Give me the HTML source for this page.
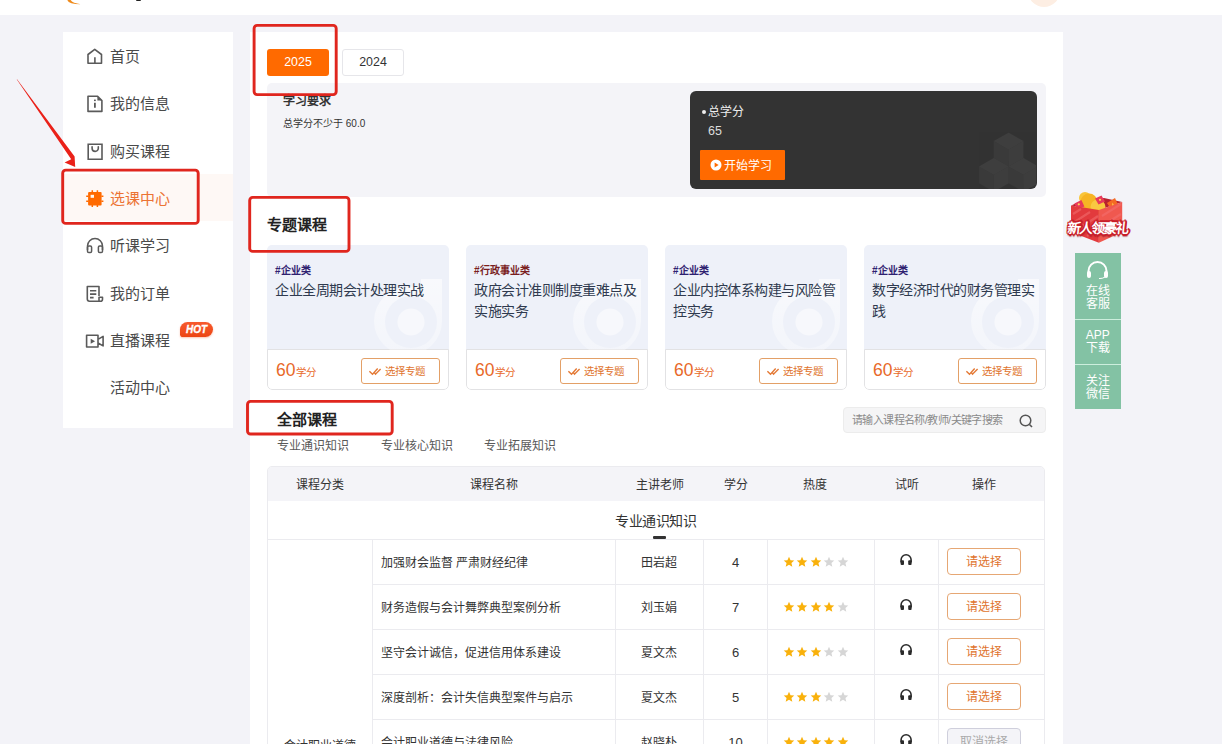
<!DOCTYPE html>
<html lang="zh-CN"><head><meta charset="utf-8">
<style>
*{box-sizing:border-box;margin:0;padding:0}
html,body{width:1222px;height:744px;overflow:hidden}
body{position:relative;background:#f3f3f8;font-family:"Liberation Sans",sans-serif;color:#333}
.a{position:absolute;white-space:nowrap}
#hdr{left:0;top:0;width:1222px;height:15px;background:#fff;overflow:hidden}
#side{left:63px;top:32px;width:170px;height:396px;background:#fff}
.nav{position:absolute;left:0;width:170px;height:47.3px}
.nav .t{position:absolute;left:46.5px;top:1px;line-height:47.3px;font-size:15px;color:#4a4a4a}
.nav svg{position:absolute;left:24px;top:16px;overflow:visible}
.nav.on{background:#fef8f5}
.nav.on .t{color:#ec7333}
#main{left:250px;top:32px;width:813px;height:720px;background:#fff}
.redbox{position:absolute;border:3px solid #e42a22;border-radius:4px}
.btnY{position:absolute;top:49px;width:62px;height:27px;border-radius:3px;font-size:12.4px;line-height:27px;text-align:center}
.card{position:absolute;top:245px;width:182px;height:145px;border-radius:5px;overflow:hidden}
.card .ft{position:absolute;left:0;top:104px;width:182px;height:41px;border:1px solid #e2e2e4;border-radius:0 0 5px 5px}
.card .up{position:absolute;left:0;top:0;width:182px;height:105px;background:#eef1f9}
.card .tag{position:absolute;left:8px;top:18.5px;font-size:10px;font-weight:bold;color:#2e2170;line-height:14px}
.card .ttl{position:absolute;left:8px;top:35px;width:170px;font-size:14px;letter-spacing:-0.5px;line-height:21px;color:#2f3a4f;white-space:normal}
.card .pts{position:absolute;left:9px;top:110px;font-size:17.5px;color:#e8692a;line-height:30px}
.card .pts small{font-size:10.5px;margin-left:1px}
.card .sel{position:absolute;left:94px;top:113px;width:79px;height:26px;border:1px solid #e3a067;border-radius:3px;color:#e0742e;font-size:10.5px;line-height:24px;padding-left:23px}
.card .sel svg{position:absolute;left:8px;top:8px;overflow:visible}
.logo{position:absolute;left:0;top:0}
th,td{font-weight:normal}
</style></head>
<body>
<svg width="0" height="0" style="position:absolute"><defs><linearGradient id="lg" x1="0" y1="0" x2="0" y2="1"><stop offset="0" stop-color="#fff" stop-opacity=".6"/><stop offset="1" stop-color="#fff" stop-opacity=".3"/></linearGradient></defs></svg>
<div id="hdr" class="a">
  <svg class="a" style="left:0;top:0" width="200" height="15" viewBox="0 0 200 15"><path d="M67.3 0 Q68.8 4.3 81 4.3 Q72.5 3.2 70.6 0 Z" fill="#ef8a1a"/></svg>
  <div class="a" style="left:136px;top:-1px;width:5px;height:2px;background:#222;border-radius:1px"></div>
  <div class="a" style="left:1028px;top:-25px;width:32px;height:32px;border-radius:50%;background:#fdeee3"></div>
</div>

<div id="side" class="a">
  <div class="nav" style="top:0"><svg width="16" height="17" viewBox="0 0 16 17"><path d="M1 15.2V6.5L7.75 1.4 14.5 6.5v8.7z M7.9 9.3v5.9" stroke="#5a5a5a" stroke-width="1.6" fill="none" stroke-linejoin="round"/></svg><span class="t">首页</span></div>
  <div class="nav" style="top:47.3px"><svg width="16" height="17" viewBox="0 0 16 17"><path d="M1 1.3h9.6l4.3 4.3v10.8H1z" stroke="#5a5a5a" stroke-width="1.6" fill="none" stroke-linejoin="round"/><path d="M10.4 1.3v4.3h4.3z" fill="#5a5a5a"/><path d="M7.9 7.8v5" stroke="#5a5a5a" stroke-width="1.8"/><rect x="7" y="4.6" width="1.8" height="1.5" fill="#5a5a5a"/></svg><span class="t">我的信息</span></div>
  <div class="nav" style="top:94.6px"><svg width="16" height="17" viewBox="0 0 16 17"><path d="M1.2 1.2h13.8v15.1H1.2z" stroke="#5a5a5a" stroke-width="1.6" fill="none"/><path d="M5.1 3.8v1.5a3.1 3.1 0 0 0 6.2 0V3.8" stroke="#5a5a5a" stroke-width="1.6" fill="none" stroke-linecap="round"/></svg><span class="t">购买课程</span></div>
  <div class="nav on" style="top:141.9px"><svg width="16" height="17" viewBox="0 0 16 17"><rect x="1.1" y="2" width="13.5" height="13.6" rx="1" fill="#ff6a00"/><path d="M5.3 0.3v2M10.4 0.3v2M5.3 15v2M10.4 15v2M-0.8 6.2h2.2M-0.8 11.3h2.2M14.4 6.2h2M14.4 11.3h2" stroke="#ff6a00" stroke-width="1.5"/><rect x="3.6" y="4.8" width="3.4" height="3" fill="#fff8f2"/></svg><span class="t">选课中心</span></div>
  <div class="nav" style="top:189.2px"><svg width="17" height="17" viewBox="0 0 17 17"><path d="M0.5 13V9.1a7.5 7.5 0 0 1 15 0V13" stroke="#5a5a5a" stroke-width="1.5" fill="none"/><rect x="0.5" y="9" width="4.1" height="6.6" rx="1.3" stroke="#5a5a5a" stroke-width="1.5" fill="none"/><rect x="11.4" y="9" width="4.1" height="6.6" rx="1.3" stroke="#5a5a5a" stroke-width="1.5" fill="none"/></svg><span class="t">听课学习</span></div>
  <div class="nav" style="top:236.5px"><svg width="17" height="17" viewBox="0 0 17 17"><path d="M12 11V1.5H0.3v12.5a2.2 2.2 0 0 0 2.2 2.2h11a2 2 0 0 0 2-2V12.2H12v4" stroke="#5a5a5a" stroke-width="1.6" fill="none" stroke-linejoin="round"/><path d="M3 5.8h6.3M3 9.1h6.3M3 12.6h3.6" stroke="#5a5a5a" stroke-width="1.6"/></svg><span class="t">我的订单</span></div>
  <div class="nav" style="top:283.8px"><svg width="17" height="17" viewBox="0 0 17 17"><path d="M-0.4 3.3h11.4v11.7H-0.4z M11 7.4l5.1-3v9.5L11 11" stroke="#5a5a5a" stroke-width="1.6" fill="none" stroke-linejoin="round"/><path d="M3.7 6.7l4.4 2.5-4.4 2.6z" fill="#5a5a5a"/></svg><span class="t">直播课程</span>
    <div class="a" style="left:117px;top:6px;width:33px;height:15px;background:linear-gradient(180deg,#f75a2e,#ec4512);border-radius:8px 8px 8px 3px;color:#fff;font-size:10px;font-weight:bold;font-style:italic;line-height:16px;text-align:center;-webkit-text-stroke:0.3px #fff;box-shadow:0 1px 2px rgba(240,90,40,.35)">HOT</div>
  </div>
  <div class="nav" style="top:331.1px"><span class="t">活动中心</span></div>
</div>

<div id="main" class="a"></div>

<!-- year tabs -->
<div class="btnY" style="left:267px;background:#ff6a00;color:#fff">2025</div>
<div class="btnY" style="left:342px;border:1px solid #e6e6ea;color:#333;line-height:25px">2024</div>
<!-- requirement -->
<div class="a" style="left:267px;top:83px;width:779px;height:114px;background:#f4f4f8;border-radius:5px"></div>
<div class="a" style="left:283px;top:93px;font-size:12px;font-weight:bold;line-height:16px;color:#333">学习要求</div>
<div class="a" style="left:283px;top:116px;font-size:10px;line-height:16px;color:#333">总学分不少于 60.0</div>
<div class="a" style="left:690px;top:91px;width:347px;height:98px;background:#333;border-radius:6px;overflow:hidden">
  <svg class="a" style="left:268px;top:37px" width="78" height="62" viewBox="0 0 74 58">
    <g opacity=".055" fill="#fff">
      <path d="M34 12l14-8 14 8-14 8z"/><path d="M34 12v16l14 8V20z" opacity=".6"/><path d="M62 12v16l-14 8V20z" opacity=".9"/>
      <path d="M20 36l14-8 14 8-14 8z"/><path d="M20 36v16l14 8V44z" opacity=".6"/><path d="M48 36v16l-14 8V44z" opacity=".9"/>
      <path d="M48 36l14-8 14 8-14 8z"/><path d="M48 36v16l14 8V44z" opacity=".6"/><path d="M76 36v16l-14 8V44z" opacity=".9"/>
    </g>
  </svg>
  <div class="a" style="left:11.5px;top:19px;width:4px;height:4px;border-radius:50%;background:#eee"></div>
  <div class="a" style="left:18px;top:13px;font-size:12px;line-height:16px;color:#eee">总学分</div>
  <div class="a" style="left:18px;top:32px;font-size:12.5px;line-height:16px;color:#ddd">65</div>
  <div class="a" style="left:10px;top:59px;width:85px;height:30px;background:#ff6a00;border-radius:1px">
    <svg class="a" style="left:10px;top:9px" width="12" height="12" viewBox="0 0 12 12"><circle cx="6" cy="6" r="5.5" fill="#fff"/><path d="M4.6 3.4v5.2L8.6 6z" fill="#ff6a00"/></svg>
    <div class="a" style="left:24px;top:8px;font-size:12px;line-height:16px;color:#fff">开始学习</div>
  </div>
</div>

<!-- 专题课程 -->
<div class="a" style="left:267px;top:214px;font-size:15px;font-weight:bold;line-height:22px;color:#222">专题课程</div>

<div class="card" style="left:267px"><div class="up"></div><div class="ft"></div><svg class="logo" width="182" height="105" viewBox="0 0 182 105"><path d="M141 42a34 34 0 1 0 34 34V34h-21v8.5A34 34 0 0 0 141 42z" fill="url(#lg)"/><circle cx="144" cy="77" r="26" fill="#eef1f9"/><circle cx="144" cy="77" r="13.6" fill="#fff" opacity=".5"/></svg><div class="tag">#企业类</div><div class="ttl">企业全周期会计处理实战</div><div class="pts">60<small>学分</small></div><div class="sel"><svg width="14" height="9" viewBox="0 0 14 9"><path d="M-0.6 4.2l3.1 3 5.2-5.6M4.2 5.2l1.3 2 5.1-5.3" stroke="#e47a36" stroke-width="1.4" fill="none"/></svg>选择专题</div></div>
<div class="card" style="left:466px"><div class="up"></div><div class="ft"></div><svg class="logo" width="182" height="105" viewBox="0 0 182 105"><path d="M141 42a34 34 0 1 0 34 34V34h-21v8.5A34 34 0 0 0 141 42z" fill="url(#lg)"/><circle cx="144" cy="77" r="26" fill="#eef1f9"/><circle cx="144" cy="77" r="13.6" fill="#fff" opacity=".5"/></svg><div class="tag" style="color:#7a1e1e">#行政事业类</div><div class="ttl">政府会计准则制度重难点及实施实务</div><div class="pts">60<small>学分</small></div><div class="sel"><svg width="14" height="9" viewBox="0 0 14 9"><path d="M-0.6 4.2l3.1 3 5.2-5.6M4.2 5.2l1.3 2 5.1-5.3" stroke="#e47a36" stroke-width="1.4" fill="none"/></svg>选择专题</div></div>
<div class="card" style="left:665px"><div class="up"></div><div class="ft"></div><svg class="logo" width="182" height="105" viewBox="0 0 182 105"><path d="M141 42a34 34 0 1 0 34 34V34h-21v8.5A34 34 0 0 0 141 42z" fill="url(#lg)"/><circle cx="144" cy="77" r="26" fill="#eef1f9"/><circle cx="144" cy="77" r="13.6" fill="#fff" opacity=".5"/></svg><div class="tag">#企业类</div><div class="ttl">企业内控体系构建与风险管控实务</div><div class="pts">60<small>学分</small></div><div class="sel"><svg width="14" height="9" viewBox="0 0 14 9"><path d="M-0.6 4.2l3.1 3 5.2-5.6M4.2 5.2l1.3 2 5.1-5.3" stroke="#e47a36" stroke-width="1.4" fill="none"/></svg>选择专题</div></div>
<div class="card" style="left:864px"><div class="up"></div><div class="ft"></div><svg class="logo" width="182" height="105" viewBox="0 0 182 105"><path d="M141 42a34 34 0 1 0 34 34V34h-21v8.5A34 34 0 0 0 141 42z" fill="url(#lg)"/><circle cx="144" cy="77" r="26" fill="#eef1f9"/><circle cx="144" cy="77" r="13.6" fill="#fff" opacity=".5"/></svg><div class="tag">#企业类</div><div class="ttl">数字经济时代的财务管理实践</div><div class="pts">60<small>学分</small></div><div class="sel"><svg width="14" height="9" viewBox="0 0 14 9"><path d="M-0.6 4.2l3.1 3 5.2-5.6M4.2 5.2l1.3 2 5.1-5.3" stroke="#e47a36" stroke-width="1.4" fill="none"/></svg>选择专题</div></div>

<!-- 全部课程 -->
<div class="a" style="left:277px;top:409px;font-size:15px;font-weight:bold;line-height:22px;color:#222">全部课程</div>
<div class="a" style="left:277px;top:438px;font-size:12px;line-height:17px;color:#595959">专业通识知识</div>
<div class="a" style="left:381px;top:438px;font-size:12px;line-height:17px;color:#595959">专业核心知识</div>
<div class="a" style="left:484px;top:438px;font-size:12px;line-height:17px;color:#595959">专业拓展知识</div>
<div class="a" style="left:843px;top:407px;width:203px;height:26px;background:#f5f5f6;border:1px solid #ececec;border-radius:4px">
  <div class="a" style="left:8px;top:4px;font-size:11px;letter-spacing:-0.6px;line-height:17px;color:#8a8a8a">请输入课程名称/教师/关键字搜索</div>
  <svg class="a" style="left:175px;top:6px" width="15" height="14" viewBox="0 0 15 14"><circle cx="6.5" cy="6.5" r="5.3" stroke="#555" stroke-width="1.5" fill="none"/><path d="M10.5 10.5l2.5 2.5" stroke="#555" stroke-width="1.6"/></svg>
</div>

<!--T0-->
<div class="a" style="left:267px;top:466px;width:778px;height:290px;border:1px solid #ebebef;border-radius:5px 5px 0 0;overflow:hidden">
<div class="a" style="left:0;top:0;width:778px;height:34px;background:#f4f4f8"></div>
</div>
<div class="a" style="left:269.8px;top:477px;width:100px;text-align:center;font-size:12px;line-height:16px;color:#333">课程分类</div>
<div class="a" style="left:443.5px;top:477px;width:100px;text-align:center;font-size:12px;line-height:16px;color:#333">课程名称</div>
<div class="a" style="left:609.7px;top:477px;width:100px;text-align:center;font-size:12px;line-height:16px;color:#333">主讲老师</div>
<div class="a" style="left:685.8px;top:477px;width:100px;text-align:center;font-size:12px;line-height:16px;color:#333">学分</div>
<div class="a" style="left:764.5px;top:477px;width:100px;text-align:center;font-size:12px;line-height:16px;color:#333">热度</div>
<div class="a" style="left:856.5px;top:477px;width:100px;text-align:center;font-size:12px;line-height:16px;color:#333">试听</div>
<div class="a" style="left:933.7px;top:477px;width:100px;text-align:center;font-size:12px;line-height:16px;color:#333">操作</div>
<div class="a" style="left:615px;top:511.5px;font-size:14px;letter-spacing:-0.5px;line-height:18px;color:#333">专业通识知识</div>
<div class="a" style="left:653px;top:536px;width:13px;height:3px;background:#333;border-radius:1px"></div>
<div class="a" style="left:267px;top:539px;width:778px;height:1px;background:#ebebef"></div>
<div class="a" style="left:372px;top:584px;width:673px;height:1px;background:#ebebef"></div>
<div class="a" style="left:372px;top:629px;width:673px;height:1px;background:#ebebef"></div>
<div class="a" style="left:372px;top:674px;width:673px;height:1px;background:#ebebef"></div>
<div class="a" style="left:372px;top:719px;width:673px;height:1px;background:#ebebef"></div>
<div class="a" style="left:372px;top:539px;width:1px;height:210px;background:#ebebef"></div>
<div class="a" style="left:615px;top:539px;width:1px;height:210px;background:#ebebef"></div>
<div class="a" style="left:703px;top:539px;width:1px;height:210px;background:#ebebef"></div>
<div class="a" style="left:767px;top:539px;width:1px;height:210px;background:#ebebef"></div>
<div class="a" style="left:874px;top:539px;width:1px;height:210px;background:#ebebef"></div>
<div class="a" style="left:938px;top:539px;width:1px;height:210px;background:#ebebef"></div>
<div class="a" style="left:381px;top:554.5px;font-size:12px;line-height:16px;color:#333">加强财会监督 严肃财经纪律</div>
<div class="a" style="left:609px;top:554.5px;width:100px;text-align:center;font-size:12px;line-height:16px;color:#333">田岩超</div>
<div class="a" style="left:705.5px;top:554.5px;width:60px;text-align:center;font-size:13px;line-height:16px;color:#333">4</div>
<div class="a" style="left:782.5px;top:555.5px;height:12px;line-height:0"><svg width="12" height="12" viewBox="0 0 24 24" style="display:inline-block;margin-right:1.6px"><path d="M12 1.5l3.1 6.9 7.4.7-5.6 5 1.7 7.4L12 17.6l-6.6 3.9 1.7-7.4-5.6-5 7.4-.7z" fill="#f9b10b"/></svg><svg width="12" height="12" viewBox="0 0 24 24" style="display:inline-block;margin-right:1.6px"><path d="M12 1.5l3.1 6.9 7.4.7-5.6 5 1.7 7.4L12 17.6l-6.6 3.9 1.7-7.4-5.6-5 7.4-.7z" fill="#f9b10b"/></svg><svg width="12" height="12" viewBox="0 0 24 24" style="display:inline-block;margin-right:1.6px"><path d="M12 1.5l3.1 6.9 7.4.7-5.6 5 1.7 7.4L12 17.6l-6.6 3.9 1.7-7.4-5.6-5 7.4-.7z" fill="#f9b10b"/></svg><svg width="12" height="12" viewBox="0 0 24 24" style="display:inline-block;margin-right:1.6px"><path d="M12 1.5l3.1 6.9 7.4.7-5.6 5 1.7 7.4L12 17.6l-6.6 3.9 1.7-7.4-5.6-5 7.4-.7z" fill="#d6d6d6"/></svg><svg width="12" height="12" viewBox="0 0 24 24" style="display:inline-block;margin-right:1.6px"><path d="M12 1.5l3.1 6.9 7.4.7-5.6 5 1.7 7.4L12 17.6l-6.6 3.9 1.7-7.4-5.6-5 7.4-.7z" fill="#d6d6d6"/></svg></div>
<svg class="a" style="left:900px;top:553.0px" width="13" height="13" viewBox="0 0 13 13"><path d="M1.1 9.5V6.8a5 5 0 0 1 10 0v2.7" stroke="#2a2a2a" stroke-width="1.6" fill="none"/><rect x="0.6" y="7.2" width="3.4" height="4.9" rx="1" fill="#2a2a2a"/><rect x="8.2" y="7.2" width="3.4" height="4.9" rx="1" fill="#2a2a2a"/></svg>
<div class="a" style="left:947px;top:548px;width:74px;height:27px;border:1px solid #e8a069;border-radius:4px;text-align:center;font-size:12px;line-height:27px;color:#e0742e;border-color:#e6a774">请选择</div>
<div class="a" style="left:381px;top:599.5px;font-size:12px;line-height:16px;color:#333">财务造假与会计舞弊典型案例分析</div>
<div class="a" style="left:609px;top:599.5px;width:100px;text-align:center;font-size:12px;line-height:16px;color:#333">刘玉娟</div>
<div class="a" style="left:705.5px;top:599.5px;width:60px;text-align:center;font-size:13px;line-height:16px;color:#333">7</div>
<div class="a" style="left:782.5px;top:600.5px;height:12px;line-height:0"><svg width="12" height="12" viewBox="0 0 24 24" style="display:inline-block;margin-right:1.6px"><path d="M12 1.5l3.1 6.9 7.4.7-5.6 5 1.7 7.4L12 17.6l-6.6 3.9 1.7-7.4-5.6-5 7.4-.7z" fill="#f9b10b"/></svg><svg width="12" height="12" viewBox="0 0 24 24" style="display:inline-block;margin-right:1.6px"><path d="M12 1.5l3.1 6.9 7.4.7-5.6 5 1.7 7.4L12 17.6l-6.6 3.9 1.7-7.4-5.6-5 7.4-.7z" fill="#f9b10b"/></svg><svg width="12" height="12" viewBox="0 0 24 24" style="display:inline-block;margin-right:1.6px"><path d="M12 1.5l3.1 6.9 7.4.7-5.6 5 1.7 7.4L12 17.6l-6.6 3.9 1.7-7.4-5.6-5 7.4-.7z" fill="#f9b10b"/></svg><svg width="12" height="12" viewBox="0 0 24 24" style="display:inline-block;margin-right:1.6px"><path d="M12 1.5l3.1 6.9 7.4.7-5.6 5 1.7 7.4L12 17.6l-6.6 3.9 1.7-7.4-5.6-5 7.4-.7z" fill="#f9b10b"/></svg><svg width="12" height="12" viewBox="0 0 24 24" style="display:inline-block;margin-right:1.6px"><path d="M12 1.5l3.1 6.9 7.4.7-5.6 5 1.7 7.4L12 17.6l-6.6 3.9 1.7-7.4-5.6-5 7.4-.7z" fill="#d6d6d6"/></svg></div>
<svg class="a" style="left:900px;top:598.0px" width="13" height="13" viewBox="0 0 13 13"><path d="M1.1 9.5V6.8a5 5 0 0 1 10 0v2.7" stroke="#2a2a2a" stroke-width="1.6" fill="none"/><rect x="0.6" y="7.2" width="3.4" height="4.9" rx="1" fill="#2a2a2a"/><rect x="8.2" y="7.2" width="3.4" height="4.9" rx="1" fill="#2a2a2a"/></svg>
<div class="a" style="left:947px;top:593px;width:74px;height:27px;border:1px solid #e8a069;border-radius:4px;text-align:center;font-size:12px;line-height:27px;color:#e0742e;border-color:#e6a774">请选择</div>
<div class="a" style="left:381px;top:644.5px;font-size:12px;line-height:16px;color:#333">坚守会计诚信，促进信用体系建设</div>
<div class="a" style="left:609px;top:644.5px;width:100px;text-align:center;font-size:12px;line-height:16px;color:#333">夏文杰</div>
<div class="a" style="left:705.5px;top:644.5px;width:60px;text-align:center;font-size:13px;line-height:16px;color:#333">6</div>
<div class="a" style="left:782.5px;top:645.5px;height:12px;line-height:0"><svg width="12" height="12" viewBox="0 0 24 24" style="display:inline-block;margin-right:1.6px"><path d="M12 1.5l3.1 6.9 7.4.7-5.6 5 1.7 7.4L12 17.6l-6.6 3.9 1.7-7.4-5.6-5 7.4-.7z" fill="#f9b10b"/></svg><svg width="12" height="12" viewBox="0 0 24 24" style="display:inline-block;margin-right:1.6px"><path d="M12 1.5l3.1 6.9 7.4.7-5.6 5 1.7 7.4L12 17.6l-6.6 3.9 1.7-7.4-5.6-5 7.4-.7z" fill="#f9b10b"/></svg><svg width="12" height="12" viewBox="0 0 24 24" style="display:inline-block;margin-right:1.6px"><path d="M12 1.5l3.1 6.9 7.4.7-5.6 5 1.7 7.4L12 17.6l-6.6 3.9 1.7-7.4-5.6-5 7.4-.7z" fill="#f9b10b"/></svg><svg width="12" height="12" viewBox="0 0 24 24" style="display:inline-block;margin-right:1.6px"><path d="M12 1.5l3.1 6.9 7.4.7-5.6 5 1.7 7.4L12 17.6l-6.6 3.9 1.7-7.4-5.6-5 7.4-.7z" fill="#d6d6d6"/></svg><svg width="12" height="12" viewBox="0 0 24 24" style="display:inline-block;margin-right:1.6px"><path d="M12 1.5l3.1 6.9 7.4.7-5.6 5 1.7 7.4L12 17.6l-6.6 3.9 1.7-7.4-5.6-5 7.4-.7z" fill="#d6d6d6"/></svg></div>
<svg class="a" style="left:900px;top:643.0px" width="13" height="13" viewBox="0 0 13 13"><path d="M1.1 9.5V6.8a5 5 0 0 1 10 0v2.7" stroke="#2a2a2a" stroke-width="1.6" fill="none"/><rect x="0.6" y="7.2" width="3.4" height="4.9" rx="1" fill="#2a2a2a"/><rect x="8.2" y="7.2" width="3.4" height="4.9" rx="1" fill="#2a2a2a"/></svg>
<div class="a" style="left:947px;top:638px;width:74px;height:27px;border:1px solid #e8a069;border-radius:4px;text-align:center;font-size:12px;line-height:27px;color:#e0742e;border-color:#e6a774">请选择</div>
<div class="a" style="left:381px;top:689.5px;font-size:12px;line-height:16px;color:#333">深度剖析：会计失信典型案件与启示</div>
<div class="a" style="left:609px;top:689.5px;width:100px;text-align:center;font-size:12px;line-height:16px;color:#333">夏文杰</div>
<div class="a" style="left:705.5px;top:689.5px;width:60px;text-align:center;font-size:13px;line-height:16px;color:#333">5</div>
<div class="a" style="left:782.5px;top:690.5px;height:12px;line-height:0"><svg width="12" height="12" viewBox="0 0 24 24" style="display:inline-block;margin-right:1.6px"><path d="M12 1.5l3.1 6.9 7.4.7-5.6 5 1.7 7.4L12 17.6l-6.6 3.9 1.7-7.4-5.6-5 7.4-.7z" fill="#f9b10b"/></svg><svg width="12" height="12" viewBox="0 0 24 24" style="display:inline-block;margin-right:1.6px"><path d="M12 1.5l3.1 6.9 7.4.7-5.6 5 1.7 7.4L12 17.6l-6.6 3.9 1.7-7.4-5.6-5 7.4-.7z" fill="#f9b10b"/></svg><svg width="12" height="12" viewBox="0 0 24 24" style="display:inline-block;margin-right:1.6px"><path d="M12 1.5l3.1 6.9 7.4.7-5.6 5 1.7 7.4L12 17.6l-6.6 3.9 1.7-7.4-5.6-5 7.4-.7z" fill="#f9b10b"/></svg><svg width="12" height="12" viewBox="0 0 24 24" style="display:inline-block;margin-right:1.6px"><path d="M12 1.5l3.1 6.9 7.4.7-5.6 5 1.7 7.4L12 17.6l-6.6 3.9 1.7-7.4-5.6-5 7.4-.7z" fill="#d6d6d6"/></svg><svg width="12" height="12" viewBox="0 0 24 24" style="display:inline-block;margin-right:1.6px"><path d="M12 1.5l3.1 6.9 7.4.7-5.6 5 1.7 7.4L12 17.6l-6.6 3.9 1.7-7.4-5.6-5 7.4-.7z" fill="#d6d6d6"/></svg></div>
<svg class="a" style="left:900px;top:688.0px" width="13" height="13" viewBox="0 0 13 13"><path d="M1.1 9.5V6.8a5 5 0 0 1 10 0v2.7" stroke="#2a2a2a" stroke-width="1.6" fill="none"/><rect x="0.6" y="7.2" width="3.4" height="4.9" rx="1" fill="#2a2a2a"/><rect x="8.2" y="7.2" width="3.4" height="4.9" rx="1" fill="#2a2a2a"/></svg>
<div class="a" style="left:947px;top:683px;width:74px;height:27px;border:1px solid #e8a069;border-radius:4px;text-align:center;font-size:12px;line-height:27px;color:#e0742e;border-color:#e6a774">请选择</div>
<div class="a" style="left:381px;top:734.5px;font-size:12px;line-height:16px;color:#333">会计职业道德与法律风险</div>
<div class="a" style="left:609px;top:734.5px;width:100px;text-align:center;font-size:12px;line-height:16px;color:#333">赵晓朴</div>
<div class="a" style="left:705.5px;top:734.5px;width:60px;text-align:center;font-size:13px;line-height:16px;color:#333">10</div>
<div class="a" style="left:782.5px;top:735.5px;height:12px;line-height:0"><svg width="12" height="12" viewBox="0 0 24 24" style="display:inline-block;margin-right:1.6px"><path d="M12 1.5l3.1 6.9 7.4.7-5.6 5 1.7 7.4L12 17.6l-6.6 3.9 1.7-7.4-5.6-5 7.4-.7z" fill="#f9b10b"/></svg><svg width="12" height="12" viewBox="0 0 24 24" style="display:inline-block;margin-right:1.6px"><path d="M12 1.5l3.1 6.9 7.4.7-5.6 5 1.7 7.4L12 17.6l-6.6 3.9 1.7-7.4-5.6-5 7.4-.7z" fill="#f9b10b"/></svg><svg width="12" height="12" viewBox="0 0 24 24" style="display:inline-block;margin-right:1.6px"><path d="M12 1.5l3.1 6.9 7.4.7-5.6 5 1.7 7.4L12 17.6l-6.6 3.9 1.7-7.4-5.6-5 7.4-.7z" fill="#f9b10b"/></svg><svg width="12" height="12" viewBox="0 0 24 24" style="display:inline-block;margin-right:1.6px"><path d="M12 1.5l3.1 6.9 7.4.7-5.6 5 1.7 7.4L12 17.6l-6.6 3.9 1.7-7.4-5.6-5 7.4-.7z" fill="#f9b10b"/></svg><svg width="12" height="12" viewBox="0 0 24 24" style="display:inline-block;margin-right:1.6px"><path d="M12 1.5l3.1 6.9 7.4.7-5.6 5 1.7 7.4L12 17.6l-6.6 3.9 1.7-7.4-5.6-5 7.4-.7z" fill="#f9b10b"/></svg></div>
<svg class="a" style="left:900px;top:733.0px" width="13" height="13" viewBox="0 0 13 13"><path d="M1.1 9.5V6.8a5 5 0 0 1 10 0v2.7" stroke="#2a2a2a" stroke-width="1.6" fill="none"/><rect x="0.6" y="7.2" width="3.4" height="4.9" rx="1" fill="#2a2a2a"/><rect x="8.2" y="7.2" width="3.4" height="4.9" rx="1" fill="#2a2a2a"/></svg>
<div class="a" style="left:947px;top:728px;width:74px;height:27px;border:1px solid #d9d9e0;background:#f4f4f8;border-radius:4px;text-align:center;font-size:12px;line-height:27px;color:#aaa;border-color:#cfcfdc">取消选择</div>
<div class="a" style="left:284px;top:738px;font-size:12px;line-height:16px;color:#333">会计职业道德</div>
<!--T1-->

<!-- right float -->
<div class="a" style="left:1064px;top:192px;width:68px;height:54px">
  <svg width="68" height="54" viewBox="0 0 68 54">
    <path d="M7 13.4L34.9 18 58.2 10 40 6 20 8z" fill="#b8232e"/>
    <circle cx="21" cy="6" r="6" fill="#f9c53a"/><circle cx="25" cy="10" r="8.5" fill="#f6b424"/><circle cx="34" cy="15" r="7.5" fill="#f9c841"/>
    <path d="M10.4 11.5l7-3.5 3 6.5-7 3z" fill="#e8395a"/><circle cx="14.8" cy="12.3" r="1.1" fill="#ffd25a"/>
    <path d="M31 6.5l6.5-3 3.5 6-6.5 3z" fill="#e8395a"/><circle cx="36" cy="7.8" r="1.1" fill="#ffd25a"/>
    <path d="M43 11l8-5 3.5 8-7 4z" fill="#f46a24"/><path d="M48.5 10.5l1.5 3-2 1.2z" fill="#ffd04a"/>
    <path d="M7 13.4L34.9 18V50.7L7 40.1z" fill="#e23a3d"/>
    <path d="M34.9 18L58.2 10V40.1L34.9 50.7z" fill="#f0584f"/>
    <path d="M9 22l8-5M9 31l17-11M13 38l21-14M23 44l12-8M38 24l19-12M38 34l19-12M40 45l17-12" stroke="#f47070" stroke-width="2.2" opacity=".55"/>
  </svg>
  <div class="a" style="left:3.5px;top:24.5px;font-size:13.5px;font-weight:bold;color:#fff;letter-spacing:-1px;transform:skewX(-6deg);text-shadow:1.2px 1.2px 0 #c81e2a,-1.2px -1.2px 0 #c81e2a,1.2px -1.2px 0 #c81e2a,-1.2px 1.2px 0 #c81e2a,0 1.6px 0 #c81e2a,1.6px 0 0 #c81e2a,-1.6px 0 0 #c81e2a,0 -1.6px 0 #c81e2a,0 2.5px 1px rgba(150,20,30,.5)">新人领豪礼</div>
</div>
<div class="a" style="left:1075.3px;top:253px;width:46px;height:156px;background:#83c2a4">
  <svg class="a" style="left:11px;top:8px" width="23" height="18" viewBox="0 0 23 18"><path d="M2.5 12V10a9 9 0 0 1 18 0v2" stroke="#fff" stroke-width="2" fill="none"/><rect x="1" y="10" width="4" height="7" rx="2" fill="#fff"/><rect x="18" y="10" width="4" height="7" rx="2" fill="#fff"/><path d="M19 16q-2 1.6-6 1.6" stroke="#fff" stroke-width="1" fill="none"/></svg>
  <div class="a" style="left:-0.5px;top:32px;width:46px;text-align:center;font-size:12px;line-height:12.5px;color:#fff;white-space:normal">在线<br>客服</div>
  <div class="a" style="left:0;top:66px;width:46px;height:1px;background:#cdeedd"></div>
  <div class="a" style="left:-0.5px;top:75px;width:46px;text-align:center;font-size:12px;line-height:12.5px;color:#fff;white-space:normal;padding-top:1px">APP<br>下载</div>
  <div class="a" style="left:0;top:111px;width:46px;height:1px;background:#cdeedd"></div>
  <div class="a" style="left:-0.5px;top:122px;width:46px;text-align:center;font-size:12px;line-height:12.5px;color:#fff;white-space:normal">关注<br>微信</div>
</div>

<!-- overlay -->
<svg class="a" style="left:0;top:0" width="1222" height="744" viewBox="0 0 1222 744">
  <path d="M17 79.2 L74.6 156.6 L75.2 167 L64.6 162.6 L71.2 159.3 L16.8 79.6 Z" fill="#ea2119"/>
  <g fill="none" stroke="#e0261e" stroke-width="2.9">
    <rect x="254.1" y="25.4" width="82.1" height="69.2" rx="3"/>
    <rect x="62.7" y="170.15" width="135.5" height="53.25" rx="3"/>
    <rect x="249.7" y="197.4" width="99.3" height="54" rx="3"/>
    <rect x="247.5" y="401.4" width="144.7" height="32.6" rx="3"/>
  </g>
</svg>
</body></html>
